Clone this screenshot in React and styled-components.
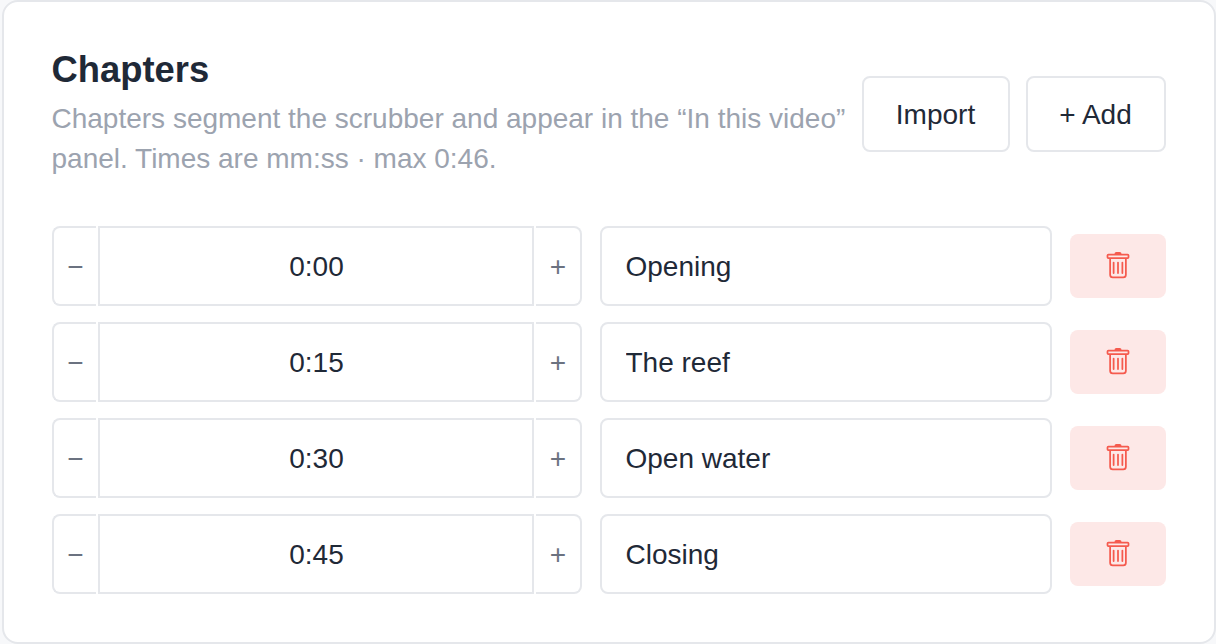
import React, { useState } from "react";
import styled, { createGlobalStyle } from "styled-components";
import { BsTrash } from "react-icons/bs";

const GlobalStyle = createGlobalStyle`
  * {
    box-sizing: border-box;
  }

  body {
    margin: 0;
    background: #f7f8fa;
    color: #1f2937;
    font-family: "Liberation Sans", Arial, sans-serif;
    font-size: 28px;
  }

  button,
  input {
    font: inherit;
    color: inherit;
    margin: 0;
  }
`;

const Card = styled.section`
  height: 644px;
  margin-left: 2px;
  padding: 48px;
  background: white;
  border: 2px solid #e5e7eb;
  border-radius: 16px;
`;

const Header = styled.header`
  display: flex;
  justify-content: space-between;
  align-items: center;
  margin-bottom: 48px;
`;

const Intro = styled.div`
  height: 128px;
  margin-left: -0.5px;
`;

const Title = styled.h2`
  margin: 0 0 9px;
  font-size: 36.4px;
  line-height: 40px;
`;

const Description = styled.p`
  margin: 0;
  color: #9ca3af;
  line-height: 40px;
`;

const Actions = styled.div`
  display: flex;
  flex-shrink: 0;
  gap: 16px;
`;

const Button = styled.button`
  width: ${props => props.$width}px;
  height: 76px;
  padding: 2px 1px 0 0;
  background: white;
  border: 2px solid #e5e7eb;
  border-radius: 8px;
`;

const ChapterList = styled.div`
  display: grid;
  gap: 16px;
`;

const ChapterRow = styled.div`
  display: grid;
  grid-template-columns: 530px 452px 96px;
  justify-content: space-between;
  align-items: center;
`;

const Stepper = styled.div`
  display: grid;
  grid-template-columns: 44px 1fr 46px;
  gap: 2px;
  height: 80px;
`;

const StepButton = styled.button`
  padding: 2px 0 0;
  background: white;
  color: #6b7280;
  border: 2px solid #e5e7eb;
  ${props =>
    props.$side === "left"
      ? "padding-left: 1px; border-right: 0; border-radius: 8px 0 0 8px;"
      : "border-left: 0; border-radius: 0 8px 8px 0;"}
`;

const Field = styled.input`
  width: 100%;
  min-width: 0;
  height: 80px;
  padding: 2px 24px 0 23.5px;
  background: white;
  border: 2px solid #e5e7eb;
  border-radius: 8px;
  outline: none;
`;

const TimeField = styled(Field)`
  padding: 2px 0 0 1px;
  border-radius: 0;
  text-align: center;
`;

const DeleteButton = styled.button`
  display: flex;
  align-items: center;
  justify-content: center;
  height: 64px;
  padding: 0;
  background: #fde8e7;
  color: #f55a4e;
  border: 0;
  border-radius: 8px;
`;

const MAX_TIME = 46;

const initialChapters = [
  { id: 1, time: 0, name: "Opening" },
  { id: 2, time: 15, name: "The reef" },
  { id: 3, time: 30, name: "Open water" },
  { id: 4, time: 45, name: "Closing" }
];

const formatTime = time =>
  `${Math.floor(time / 60)}:${String(time % 60).padStart(2, "0")}`;

const App = () => {
  const [chapters, setChapters] = useState(initialChapters);

  const update = (id, values) =>
    setChapters(chapters.map(c => (c.id === id ? { ...c, ...values } : c)));

  const step = ({ id, time }, by) =>
    update(id, { time: Math.min(MAX_TIME, Math.max(0, time + by)) });

  const add = () =>
    setChapters([...chapters, { id: Date.now(), time: MAX_TIME, name: "" }]);

  const remove = id => setChapters(chapters.filter(c => c.id !== id));

  return (
    <>
      <GlobalStyle />
      <Card>
        <Header>
          <Intro>
            <Title>Chapters</Title>
            <Description>
              {`Chapters segment the scrubber and appear in the “In this video” panel. Times are mm:ss · max ${formatTime(
                MAX_TIME
              )}.`}
            </Description>
          </Intro>
          <Actions>
            <Button $width={148}>Import</Button>
            <Button $width={140} onClick={add}>
              + Add
            </Button>
          </Actions>
        </Header>
        <ChapterList>
          {chapters.map(chapter => (
            <ChapterRow key={chapter.id}>
              <Stepper>
                <StepButton $side="left" onClick={() => step(chapter, -1)}>
                  −
                </StepButton>
                <TimeField readOnly value={formatTime(chapter.time)} />
                <StepButton $side="right" onClick={() => step(chapter, 1)}>
                  +
                </StepButton>
              </Stepper>
              <Field
                value={chapter.name}
                onChange={e => update(chapter.id, { name: e.target.value })}
              />
              <DeleteButton onClick={() => remove(chapter.id)}>
                <BsTrash size={28} />
              </DeleteButton>
            </ChapterRow>
          ))}
        </ChapterList>
      </Card>
    </>
  );
};

export default App;
